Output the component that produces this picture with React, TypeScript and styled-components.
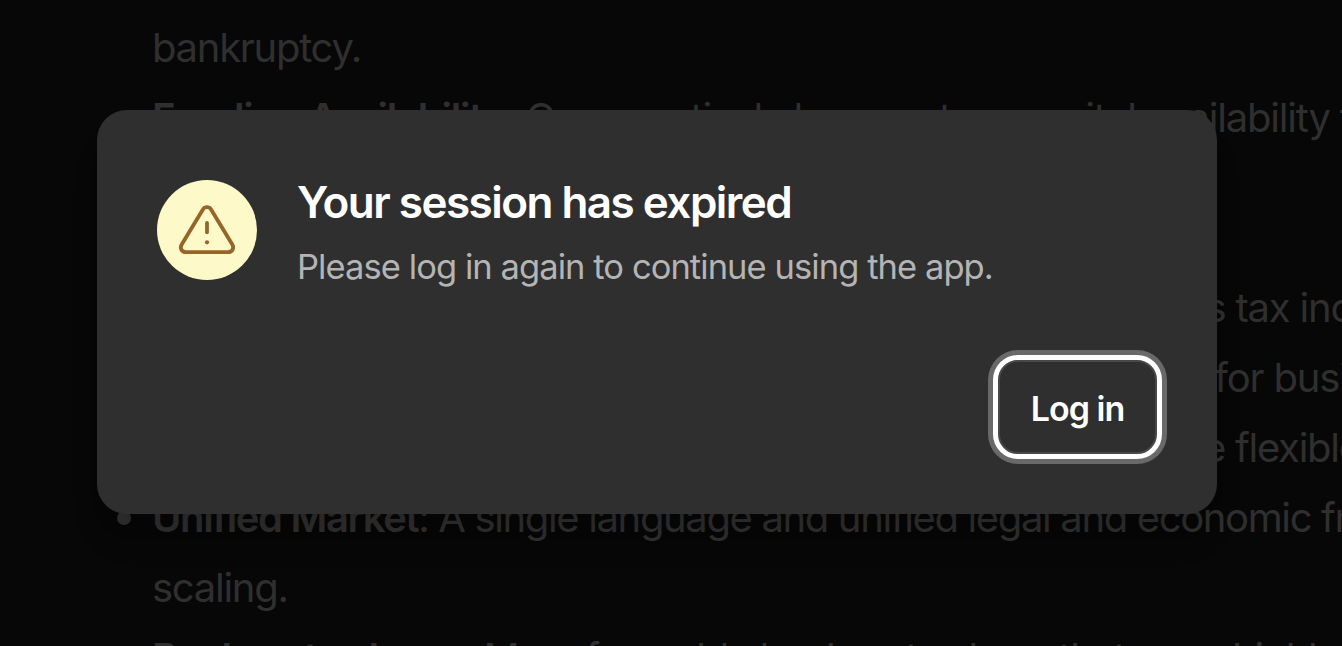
import React from 'react';
import styled, { createGlobalStyle } from 'styled-components';

const GlobalStyle = createGlobalStyle`
  body {
    margin: 0;
    overflow: hidden;
    background: #070707;
    font-family: Inter, 'Liberation Sans', sans-serif;
  }
`;

const Screen = styled.div`
  position: relative;
  height: 646px;
  overflow: hidden;
`;

const Article = styled.main`
  padding: 13px 0 0 152px;
  color: #2f2f2f;
  font-size: 40px;
  line-height: 70px;
`;

const List = styled.ul`
  margin: 0 0 50px;
  padding: 0;
  list-style: none;
`;

const Item = styled.li`
  display: flex;
  flex-direction: column;
`;

const Line = styled.span<{ $spacing?: number; $bullet?: boolean }>`
  position: relative;
  height: 70px;
  white-space: pre;
  letter-spacing: ${props => props.$spacing ?? -1.28}px;

  &::before {
    content: '';
    display: ${props => (props.$bullet ? 'block' : 'none')};
    position: absolute;
    top: 28px;
    left: -35px;
    width: 14px;
    height: 14px;
    border-radius: 50%;
    background: #2f2f2f;
  }

  strong {
    font-weight: 600;
  }
`;

const Overlay = styled.div`
  position: absolute;
  inset: 0;
  padding: 110px 0 0 97px;
`;

const Dialog = styled.div`
  box-sizing: border-box;
  display: flex;
  flex-direction: column;
  justify-content: space-between;
  width: 1120px;
  height: 404px;
  padding: 70px 55px 55px 60px;
  border-radius: 30px;
  background: #2f2f2f;
  box-shadow: 0 30px 40px -12px rgba(0, 0, 0, 0.12), 0 20px 25px -15px rgba(0, 0, 0, 0.1);
`;

const DialogBody = styled.div`
  display: flex;
  gap: 40px;
`;

const IconCircle = styled.div`
  display: flex;
  align-items: center;
  justify-content: center;
  width: 100px;
  height: 100px;
  border-radius: 50%;
  background: #fef9c9;
  color: #95652a;
`;

const Title = styled.h2`
  margin: 0;
  color: #fff;
  font-size: 44px;
  font-weight: 600;
  line-height: 44px;
  letter-spacing: -1.52px;
  white-space: nowrap;
`;

const Message = styled.p`
  margin: 18px 0 0;
  color: #b4b4b4;
  font-size: 34.5px;
  line-height: 50px;
  letter-spacing: -0.93px;
  white-space: nowrap;
`;

const Actions = styled.div`
  display: flex;
  justify-content: flex-end;
`;

const LoginButton = styled.button`
  width: 169px;
  height: 104px;
  padding: 3px 0 0;
  border: 5px solid #fff;
  border-radius: 25px;
  background: #2f2f2f;
  box-shadow: 0 0 0 5px #696969, inset 0 0 0 2px #484848;
  color: #fff;
  font: inherit;
  font-size: 34px;
  font-weight: 600;
  letter-spacing: -1px;
`;

const WarningIcon = () => (
  <svg width="60" height="60" viewBox="0 0 60 60" fill="none" stroke="currentColor" strokeWidth="3.8" strokeLinecap="round" strokeLinejoin="round">
    <path d="M25.9 9.5 L4.7 44.5 C2.5 48.2 4.8 52.2 9 52.2 H51 C55.2 52.2 57.5 48.2 55.3 44.5 L34.1 9.5 C32.2 6.4 27.8 6.4 25.9 9.5 Z" />
    <path d="M30 23 V32.3" />
    <circle cx="30" cy="42.3" r="2.1" fill="currentColor" stroke="none" />
  </svg>
);

const App: React.FC = () => {
  return (
    <Screen>
      <GlobalStyle />
      <Article>
        <List>
          <Item>
            <Line>bankruptcy.</Line>
          </Item>
          <Item>
            <Line $spacing={-1.2}><strong>Funding Availability</strong>: Comparatively less venture capital availability than</Line>
            <Line>in the US.</Line>
          </Item>
        </List>
        <List>
          <Item>
            <Line $bullet $spacing={-1.2}><strong>Tax Incentives</strong>: A number of the states also offer businesses tax incentives</Line>
          </Item>
          <Item>
            <Line $bullet $spacing={-1.2}><strong>Legal Structure</strong>: A simple and stable legal framework made for businesses</Line>
          </Item>
          <Item>
            <Line $bullet><strong>Labor Laws</strong>: Hiring and employment regulations are far more flexible</Line>
          </Item>
          <Item>
            <Line $bullet $spacing={-1.36}><strong>Unified Market</strong>: A single language and unified legal and economic framework</Line>
            <Line>scaling.</Line>
          </Item>
          <Item>
            <Line $spacing={-1.42}><strong>Bankruptcy Laws</strong>: More favorable bankruptcy laws that were highly</Line>
          </Item>
        </List>
      </Article>
      <Overlay>
        <Dialog role="dialog" aria-labelledby="session-title">
          <DialogBody>
            <IconCircle>
              <WarningIcon />
            </IconCircle>
            <div>
              <Title id="session-title">Your session has expired</Title>
              <Message>Please log in again to continue using the app.</Message>
            </div>
          </DialogBody>
          <Actions>
            <LoginButton>Log in</LoginButton>
          </Actions>
        </Dialog>
      </Overlay>
    </Screen>
  );
};

export default App;
